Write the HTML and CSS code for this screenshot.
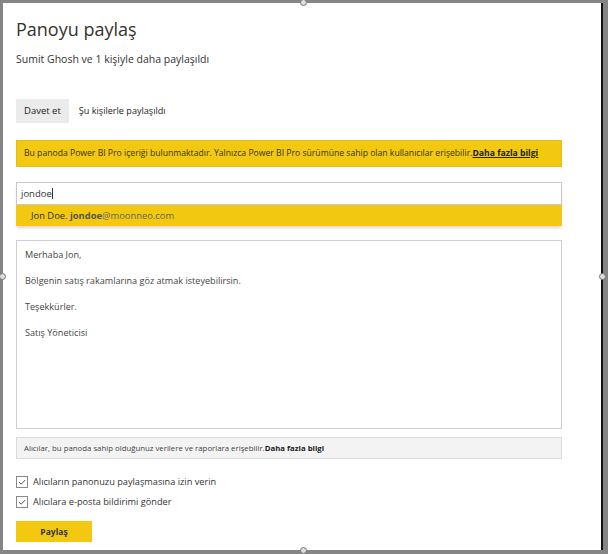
FILE: index.html
```html
<!DOCTYPE html>
<html lang="tr">
<head>
<meta charset="utf-8">
<link rel="stylesheet" href="styles.css">
</head>
<body>
<div class="frame">
  <div class="dialog">
    <h1 class="title">Panoyu paylaş</h1>
    <p class="subtitle">Sumit Ghosh ve 1 kişiyle daha paylaşıldı</p>
    <div class="tabs">
      <span class="tab active">Davet et</span>
      <span class="tab">Şu kişilerle paylaşıldı</span>
    </div>
    <div class="banner">Bu panoda Power BI Pro içeriği bulunmaktadır. Yalnızca Power BI Pro sürümüne sahip olan kullanıcılar erişebilir.<a class="banner-link">Daha fazla bilgi</a></div>
    <div class="picker">
      <div class="input">jondoe<span class="caret"></span></div>
      <div class="suggest">Jon Doe. <b>jondoe</b><span class="domain">@moonneo.com</span></div>
    </div>
    <div class="message">
      <p>Merhaba Jon,</p>
      <p>Bölgenin satış rakamlarına göz atmak isteyebilirsin.</p>
      <p>Teşekkürler.</p>
      <p>Satış Yöneticisi</p>
    </div>
    <div class="info">Alıcılar, bu panoda sahip olduğunuz verilere ve raporlara erişebilir.<b>Daha fazla bilgi</b></div>
    <div class="checks">
      <label class="check"><span class="box"><svg viewBox="0 0 12 12" width="12" height="12"><path d="M2.5 6.2 L5 8.6 L9.8 3.6" fill="none" stroke="#444" stroke-width="1.1"/></svg></span>Alıcıların panonuzu paylaşmasına izin verin</label>
      <label class="check"><span class="box"><svg viewBox="0 0 12 12" width="12" height="12"><path d="M2.5 6.2 L5 8.6 L9.8 3.6" fill="none" stroke="#444" stroke-width="1.1"/></svg></span>Alıcılara e-posta bildirimi gönder</label>
    </div>
    <button class="share">Paylaş</button>
    <span class="handle h-top"></span>
    <span class="handle h-left"></span>
    <span class="handle h-right"></span>
    <span class="handle h-bottom"></span>
  </div>
</div>
</body>
</html>
```
FILE: styles.css
```css
* { box-sizing: border-box; }
html, body { margin: 0; padding: 0; }
body {
  width: 608px;
  height: 554px;
  background: #858585;
  font-family: "Open Sans", "Noto Sans", sans-serif;
  color: #333;
  overflow: hidden;
}
.frame {
  padding: 3px 3px 4px 3px;
  height: 554px;
}
.dialog {
  position: relative;
  background: #fff;
  width: 600px;
  height: 547px;
  border-right: 2px solid #111;
  padding: 14px 39px 0 13px;
}
.title {
  margin: 0;
  font-weight: 400;
  font-size: 18px;
  line-height: 24px;
  color: #333;
}
.subtitle {
  margin: 10px 0 0;
  font-size: 10.5px;
  line-height: 16px;
  color: #333;
}
.tabs {
  margin-top: 32px;
  display: flex;
  align-items: center;
  height: 24px;
}
.tab {
  font-size: 9.1px;
  line-height: 24px;
  padding: 0 8px;
  color: #222;
}
.tab.active {
  background: #ebebeb;
  font-size: 9.5px;
}
.tab + .tab { padding-left: 10px; }
.banner {
  margin-top: 17px;
  height: 27px;
  background: #f2c811;
  border: 1px solid #e6bd0e;
  font-size: 8.65px;
  line-height: 25px;
  padding: 0 7px;
  color: #3a3320;
  white-space: nowrap;
}
.banner-link {
  font-weight: 700;
  text-decoration: underline;
  color: #222;
}
.picker {
  margin-top: 15px;
  box-shadow: 0 3px 3px -1px rgba(200, 120, 120, 0.35);
}
.input {
  height: 23px;
  border: 1px solid #c8c8c8;
  font-size: 9.5px;
  line-height: 21px;
  padding: 0 4px;
  color: #333;
  display: flex;
  align-items: center;
}
.caret {
  display: inline-block;
  width: 1px;
  height: 11px;
  background: #333;
}
.suggest {
  height: 21px;
  background: #f2c811;
  font-size: 9.4px;
  line-height: 21px;
  padding-left: 15px;
  color: #333;
}
.suggest b { color: #555; font-weight: 700; }
.suggest .domain { color: #666; }
.message {
  margin-top: 14px;
  height: 189px;
  border: 1px solid #cfcfcf;
  padding: 8px 8px;
  font-size: 9.1px;
  color: #444;
}
.message p {
  margin: 0 0 14px;
  line-height: 12px;
}
.info {
  margin-top: 8px;
  height: 22px;
  background: #f3f3f3;
  border: 1px solid #dcdcdc;
  font-size: 7.8px;
  line-height: 20px;
  padding: 0 7px;
  color: #444;
}
.info b { color: #222; }
.checks {
  margin-top: 16px;
  display: flex;
  flex-direction: column;
  gap: 7px;
}
.check {
  display: flex;
  align-items: center;
  gap: 5px;
  font-size: 9.2px;
  line-height: 13px;
  color: #333;
}
.box {
  width: 12px;
  height: 12px;
  border: 1px solid #8a8a8a;
  display: flex;
  align-items: center;
  justify-content: center;
  background: #fff;
}
.box svg { display: block; }
.share {
  margin-top: 13px;
  display: block;
  width: 76px;
  height: 21px;
  background: #f2c811;
  border: none;
  font-family: inherit;
  font-size: 8.5px;
  font-weight: 700;
  color: #333;
  padding: 0;
}
.handle {
  position: absolute;
  width: 7px;
  height: 7px;
  border-radius: 50%;
  border: 1px solid #777;
  background: #ddd;
}
.h-top { top: -4px; left: 297px; }
.h-bottom { bottom: -4px; left: 297px; }
.h-left { left: -4px; top: 270px; }
.h-right { right: -5px; top: 270px; }
```
